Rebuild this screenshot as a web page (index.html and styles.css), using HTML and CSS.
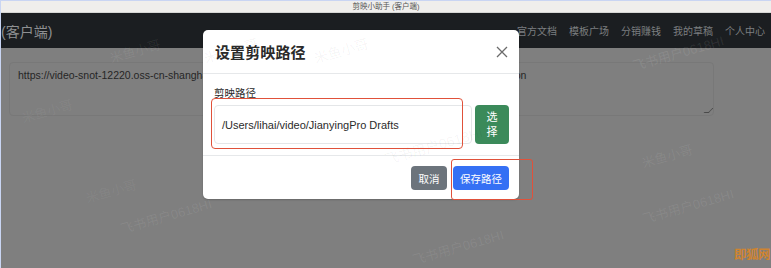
FILE: index.html
```html
<!DOCTYPE html>
<html lang="zh">
<head>
<meta charset="utf-8">
<title>剪映小助手 (客户端)</title>
<link rel="stylesheet" href="styles.css">
</head>
<body>
<div class="stage">
  <div class="titlebar">剪映小助手 (客户端)</div>
  <nav class="navbar">
    <span class="brand">(客户端)</span>
    <ul class="nav">
      <li>官方文档</li>
      <li>模板广场</li>
      <li>分销赚钱</li>
      <li>我的草稿</li>
      <li>个人中心</li>
    </ul>
  </nav>
  <main class="content">
    <div class="textarea">https://video-snot-12220.oss-cn-shanghai.aliyuncs.com/draft/20240618/jianying_template_video_0618_1.json<span class="grip"></span></div>
  </main>

  <div class="wm w1">米鱼小哥</div>
  <div class="wm w2">飞书用户0618HI</div>
  <div class="wm w3">米鱼小哥</div>
  <div class="wm w4">飞书用户0618HI</div>
  <div class="wm w5">飞书用户0618HI</div>
  <div class="wm w6">米鱼小哥</div>
  <div class="wm w7">飞书用户0618HI</div>
  <div class="wm w8">飞书用户0618HI</div>
  <div class="wm w9">米鱼小哥</div>

  <div class="modal">
    <div class="modal-header">
      <h5 class="modal-title">设置剪映路径</h5>
      <svg class="close" width="12" height="12" viewBox="0 0 12 12"><path d="M1 1L11 11M11 1L1 11" stroke="#6b6b6b" stroke-width="1.3" fill="none"/></svg>
    </div>
    <div class="modal-body">
      <label class="label">剪映路径</label>
      <div class="input-group">
        <div class="input">/Users/lihai/video/JianyingPro Drafts</div>
        <button class="btn btn-success">选<br>择</button>
      </div>
    </div>
    <div class="modal-footer">
      <button class="btn btn-secondary">取消</button>
      <button class="btn btn-primary">保存路径</button>
    </div>
    <div class="wm mw1">米鱼小哥</div>
    <div class="wm mw2">飞书用户0618HI</div>
    <div class="wm mw3">米鱼小哥</div>
  </div>

  <div class="mark mark-input"></div>
  <div class="mark mark-save"></div>
  <div class="logo">即狐网</div>
</div>
</body>
</html>
```
FILE: styles.css
```css
* { box-sizing: border-box; }
html, body { margin: 0; padding: 0; }
body {
  width: 771px;
  height: 268px;
  overflow: hidden;
  font-family: "Liberation Sans", "Noto Sans CJK SC", sans-serif;
  background: #7f7f7f;
}
.stage {
  position: relative;
  width: 771px;
  height: 268px;
  display: flex;
  flex-direction: column;
  background: #7f7f7f;
  border-left: 1px solid #c9d5f3;
  border-top: 1px solid #c9d5f3;
}
.titlebar {
  height: 12px;
  background: #efeeec;
  border-bottom: 1px solid #d6d6d4;
  font-size: 7.5px;
  line-height: 11px;
  text-align: center;
  color: #555;
}
.navbar {
  height: 35px;
  background: #1b1e21;
  display: flex;
  align-items: center;
  justify-content: space-between;
  padding: 0 6px 0 0;
}
.brand {
  font-size: 14px;
  color: #8e9092;
  margin-left: 0;
}
.nav {
  list-style: none;
  margin: 0;
  padding: 0;
  display: flex;
  gap: 12px;
  font-size: 10px;
  color: #7c7e80;
}
.content {
  flex: 1;
  padding: 14px 57px 0 8px;
}
.textarea {
  position: relative;
  height: 54px;
  border: 1px solid #787878;
  border-radius: 4px;
  background: #7f7f7f;
  padding: 5px 8px;
  font-size: 10.5px;
  line-height: 14px;
  color: #262626;
  white-space: nowrap;
  overflow: hidden;
}
.grip {
  position: absolute;
  right: 2px;
  bottom: 2px;
  width: 5px;
  height: 5px;
  border-right: 1px solid #4a4a4a;
  border-bottom: 1px solid #4a4a4a;
  transform: skewX(-45deg);
}
.wm {
  position: absolute;
  font-size: 13px;
  color: rgba(255, 255, 255, 0.07);
  transform: rotate(-16deg);
  white-space: nowrap;
  pointer-events: none;
}
.w1 { left: 108px; top: 40px; }
.w2 { left: 118px; top: 205px; }
.w3 { left: 84px; top: 180px; color: rgba(255,255,255,0.05); }
.w4 { left: 630px; top: 42px; color: rgba(255,255,255,0.09); }
.w5 { left: 640px; top: 195px; }
.w6 { left: 640px; top: 145px; }
.w7 { left: 410px; top: 236px; }
.w8 { left: 230px; top: 120px; color: rgba(255,255,255,0.05); }
.w9 { left: 20px; top: 100px; color: rgba(255,255,255,0.05); }

.modal {
  position: absolute;
  left: 202px;
  top: 29px;
  width: 316px;
  height: 169px;
  background: #fff;
  border-radius: 5px;
  box-shadow: 0 1px 2px rgba(0,0,0,0.2);
  display: flex;
  flex-direction: column;
  overflow: hidden;
}
.modal .wm { color: rgba(0, 0, 0, 0.045); font-size: 14px; }
.mw1 { left: 0; top: 10px; }
.mw2 { left: 180px; top: 105px; }
.mw3 { left: 110px; top: 10px; }
.modal-header {
  height: 44px;
  border-bottom: 1px solid #e6e8ea;
  display: flex;
  align-items: center;
  justify-content: space-between;
  padding: 0 11px 0 12px;
}
.modal-title {
  margin: 0;
  font-size: 15px;
  font-weight: bold;
  color: #2a2a2a;
  letter-spacing: 0.1px;
}
.close { margin-top: 1px; }
.modal-body {
  height: 82px;
  border-bottom: 1px solid #e6e8ea;
  padding: 13px 10px 0 11px;
}
.label {
  display: block;
  font-size: 10.5px;
  line-height: 12px;
  color: #2a2a2a;
  margin-bottom: 6px;
}
.input-group {
  display: flex;
  gap: 3px;
  height: 39px;
}
.input {
  flex: 1;
  border: 1px solid #e4e6e8;
  border-radius: 4px;
  display: flex;
  align-items: center;
  padding-left: 7px;
  padding-top: 1px;
  font-size: 11px;
  color: #2b2b2b;
}
.btn {
  border: none;
  border-radius: 4px;
  color: #fff;
  font-family: "Liberation Sans", "Noto Sans CJK SC", sans-serif;
  font-size: 10.5px;
  padding: 0;
  cursor: pointer;
}
.btn-success {
  width: 34px;
  background: #3b8a5a;
  line-height: 15px;
  font-size: 11px;
}
.modal-footer {
  flex: 1;
  display: flex;
  justify-content: flex-end;
  align-items: flex-start;
  gap: 6px;
  padding: 10px 10px 0 0;
}
.btn-secondary {
  width: 36px;
  height: 24px;
  background: #6c747c;
}
.btn-primary {
  width: 56px;
  height: 24px;
  background: #3570f4;
}
.mark {
  position: absolute;
  border: 1.5px solid #e0513a;
  border-radius: 4px;
  pointer-events: none;
}
.mark-input { left: 210px; top: 97px; width: 252px; height: 51px; }
.mark-save { left: 450px; top: 158px; width: 82px; height: 41px; border-radius: 3px; }
.logo {
  position: absolute;
  right: 1px;
  bottom: 5px;
  font-size: 12.5px;
  font-weight: bold;
  color: #cf8430;
  letter-spacing: -0.5px;
}
```
